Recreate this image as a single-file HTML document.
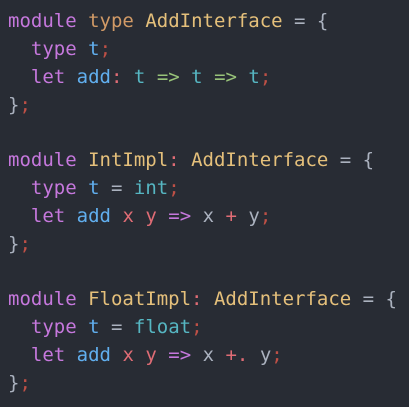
<!DOCTYPE html><html><head><style>
html,body{margin:0;padding:0;background:#282c34;width:409px;height:407px;overflow:hidden}
pre{margin:0;padding:8px 0 0 8px;font-family:"DejaVu Sans Mono","Liberation Mono",monospace;font-size:19px;line-height:27.85px;color:#abb2bf}
.k{color:#c678dd}.o{color:#d19a66}.y{color:#e5c07b}.b{color:#61afef}.c{color:#56b6c2}.g{color:#98c379}.r{color:#e06c75}.d{color:#be5046}
</style></head><body><pre><span class="k">module</span> <span class="o">type</span> <span class="y">AddInterface</span> = {
  <span class="k">type</span> <span class="b">t</span><span class="d">;</span>
  <span class="k">let</span> <span class="b">add</span><span class="r">:</span> <span class="c">t</span> <span class="g">=&gt;</span> <span class="c">t</span> <span class="g">=&gt;</span> <span class="c">t</span><span class="d">;</span>
}<span class="d">;</span>

<span class="k">module</span> <span class="y">IntImpl</span><span class="r">:</span> <span class="y">AddInterface</span> = {
  <span class="k">type</span> <span class="b">t</span> = <span class="c">int</span><span class="d">;</span>
  <span class="k">let</span> <span class="b">add</span> <span class="r">x</span> <span class="r">y</span> <span class="k">=&gt;</span> x <span class="r">+</span> y<span class="d">;</span>
}<span class="d">;</span>

<span class="k">module</span> <span class="y">FloatImpl</span><span class="r">:</span> <span class="y">AddInterface</span> = {
  <span class="k">type</span> <span class="b">t</span> = <span class="c">float</span><span class="d">;</span>
  <span class="k">let</span> <span class="b">add</span> <span class="r">x</span> <span class="r">y</span> <span class="k">=&gt;</span> x <span class="r">+.</span> y<span class="d">;</span>
}<span class="d">;</span></pre></body></html>
